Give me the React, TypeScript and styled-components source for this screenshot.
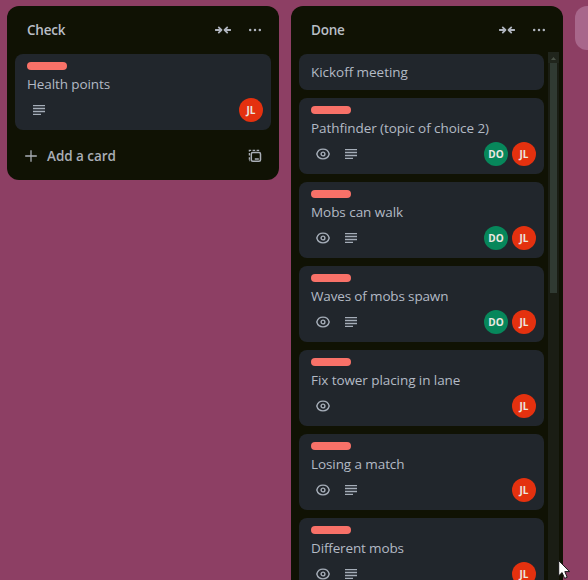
import React from "react";
import styled, { createGlobalStyle } from "styled-components";

const GlobalStyle = createGlobalStyle`
  * { box-sizing: border-box; }
  html, body { margin: 0; padding: 0; overflow: hidden; }
  body { background: #8d3f64; }
`;

const Board = styled.main`
  position: relative;
  display: flex;
  align-items: flex-start;
  gap: 12px;
  width: 588px;
  height: 580px;
  padding: 6px 0 0 7px;
  overflow: hidden;
  background: #8d3f64;
  color: #b3bac5;
  font-family: "Open Sans", "Noto Sans", sans-serif;
  font-size: 13.5px;
  line-height: 20px;
`;

const Column = styled.section<{ $tall?: boolean }>`
  flex: 0 0 272px;
  height: ${(p) => (p.$tall ? "620px" : "174px")};
  border-radius: 12px;
  background: #101204;
  overflow: hidden;
`;

const ColumnHeader = styled.header`
  display: flex;
  align-items: center;
  height: 46px;
  padding: 2px 16px 0 20px;
`;

const ColumnTitle = styled.h2`
  flex: 1;
  margin: 0;
  font-size: 13.5px;
  font-weight: 600;
  line-height: 20px;
  letter-spacing: -0.2px;
  color: #b9bec6;
`;

const HeaderIcons = styled.div`
  display: flex;
  align-items: center;
  gap: 16px;
  color: #aeb3bc;
  svg { display: block; }
`;

const ListBody = styled.div`
  display: flex;
  align-items: flex-start;
  gap: 4px;
`;

const Cards = styled.div`
  display: flex;
  flex: 1;
  flex-direction: column;
  gap: 8px;
  padding: 2px 0 0 8px;
`;

const SingleCards = styled(Cards)`
  padding-right: 8px;
`;

const CardBox = styled.article`
  display: flex;
  flex-direction: column;
  padding: 8px 8px 8px 12px;
  border-radius: 8px;
  background: #21262c;
`;

const Label = styled.div`
  width: 40px;
  height: 8px;
  margin-bottom: 4px;
  border-radius: 4px;
  background: #f87168;
`;

const CardTitle = styled.div<{ $spacing: number }>`
  height: 20px;
  white-space: nowrap;
  letter-spacing: ${(p) => p.$spacing}px;
`;

const CardFooter = styled.div`
  display: flex;
  align-items: center;
  justify-content: space-between;
  height: 24px;
  margin-top: 4px;
`;

const Badges = styled.div`
  display: flex;
  gap: 12px;
  padding-left: 4px;
  color: #a5adb8;
  svg { display: block; }
`;

const Members = styled.div`
  display: flex;
  gap: 4px;
`;

const Avatar = styled.span<{ $color: string }>`
  width: 24px;
  height: 24px;
  border-radius: 50%;
  background: ${(p) => p.$color};
  color: #ece8e2;
  font-size: 10px;
  font-weight: 700;
  line-height: 24px;
  text-align: center;
`;

const AddRow = styled.footer`
  display: flex;
  align-items: center;
  height: 36px;
  margin-top: 8px;
  padding: 0 16px;
  color: #a9aeb6;
  svg { display: block; }
`;

const AddText = styled.span`
  flex: 1;
  margin-left: 8px;
  font-weight: 600;
  letter-spacing: -0.04px;
`;

const ScrollTrack = styled.div`
  flex: 0 0 11px;
  height: 560px;
  margin-right: 4px;
  background: #1a1d14;
`;

const ScrollArrow = styled.div`
  display: flex;
  align-items: center;
  justify-content: center;
  height: 11px;
  background: #20251c;
`;

const ScrollThumb = styled.div`
  height: 230px;
  margin: 0 2px;
  background: #303a32;
`;

const AddListButton = styled.div`
  flex: 0 0 272px;
  height: 44px;
  border-radius: 12px;
  background: #a8678b;
`;

const Pointer = styled.svg`
  position: absolute;
  left: 558px;
  top: 560px;
`;

const CollapseIcon = () => (
  <svg width="16" height="16" viewBox="0 0 16 16" fill="none" stroke="currentColor" strokeWidth="1.8" strokeLinecap="round" strokeLinejoin="round">
    <path d="M.6 8H6M3.8 5.4 6.4 8 3.8 10.6M15.4 8H10M12.2 5.4 9.6 8l2.6 2.6" />
  </svg>
);

const MoreIcon = () => (
  <svg width="16" height="16" viewBox="0 0 16 16" fill="currentColor">
    <circle cx="3.2" cy="8" r="1.25" />
    <circle cx="8" cy="8" r="1.25" />
    <circle cx="12.8" cy="8" r="1.25" />
  </svg>
);

const EyeIcon = () => (
  <svg width="16" height="16" viewBox="0 0 16 16" fill="none" stroke="currentColor" strokeWidth="1.4">
    <path d="M1.8 8C2.6 5 4.9 3.1 8 3.1S13.4 5 14.2 8c-.8 3-3.1 4.9-6.2 4.9S2.6 11 1.8 8Z" />
    <circle cx="8" cy="8" r="1.9" />
  </svg>
);

const TextIcon = () => (
  <svg width="16" height="16" viewBox="0 0 16 16" fill="none" stroke="currentColor" strokeWidth="1.4">
    <path d="M2 3.6h12M2 6.5h12M2 9.5h12M2 12.4h8" />
  </svg>
);

const PlusIcon = () => (
  <svg width="16" height="16" viewBox="0 0 16 16" fill="none" stroke="currentColor" strokeWidth="1.3">
    <path d="M8 2.2v11.6M2.2 8h11.6" />
  </svg>
);

const TemplateIcon = () => (
  <svg width="16" height="16" viewBox="0 0 16 16" fill="none" stroke="currentColor" strokeWidth="1.3">
    <rect x="4.3" y="4.5" width="9.2" height="8.8" rx="1.5" strokeWidth="1.5" />
    <path d="M7.8 10.9h4" strokeWidth="1.5" />
    <path d="M2.4 11.8V9.2M2.4 7.6V5M2.4 3.6V2.4H4.2M5.6 2.4h2.6M9.6 2.4h2.6M2.4 12.6h.8" />
  </svg>
);

const memberColors: Record<string, string> = { DO: "#07875b", JL: "#e4310f" };

interface CardData {
  title: string;
  spacing?: number;
  watched?: boolean;
  described?: boolean;
  members?: string[];
}

const doneCards: CardData[] = [
  { title: "Kickoff meeting", spacing: -0.04 },
  { title: "Pathfinder (topic of choice 2)", spacing: -0.07, watched: true, described: true, members: ["DO", "JL"] },
  { title: "Mobs can walk", spacing: -0.05, watched: true, described: true, members: ["DO", "JL"] },
  { title: "Waves of mobs spawn", spacing: -0.15, watched: true, described: true, members: ["DO", "JL"] },
  { title: "Fix tower placing in lane", spacing: -0.07, watched: true, members: ["JL"] },
  { title: "Losing a match", spacing: -0.09, watched: true, described: true, members: ["JL"] },
  { title: "Different mobs", spacing: -0.15, watched: true, described: true, members: ["JL"] },
];

const Card = ({ title, spacing = 0, watched, described, members }: CardData) => (
  <CardBox>
    {members && <Label />}
    <CardTitle $spacing={spacing}>{title}</CardTitle>
    {members && (
      <CardFooter>
        <Badges>
          {watched && <EyeIcon />}
          {described && <TextIcon />}
        </Badges>
        <Members>
          {members.map((m) => (
            <Avatar key={m} $color={memberColors[m]}>{m}</Avatar>
          ))}
        </Members>
      </CardFooter>
    )}
  </CardBox>
);

const Header = ({ title }: { title: string }) => (
  <ColumnHeader>
    <ColumnTitle>{title}</ColumnTitle>
    <HeaderIcons>
      <CollapseIcon />
      <MoreIcon />
    </HeaderIcons>
  </ColumnHeader>
);

export default function App() {
  return (
    <>
      <GlobalStyle />
      <Board>
        <Column>
          <Header title="Check" />
          <SingleCards>
            <Card title="Health points" spacing={-0.1} described members={["JL"]} />
          </SingleCards>
          <AddRow>
            <PlusIcon />
            <AddText>Add a card</AddText>
            <TemplateIcon />
          </AddRow>
        </Column>
        <Column $tall>
          <Header title="Done" />
          <ListBody>
            <Cards>
              {doneCards.map((c) => (
                <Card key={c.title} {...c} />
              ))}
            </Cards>
            <ScrollTrack>
              <ScrollArrow>
                <svg width="5" height="4" viewBox="0 0 5 4" fill="#4a5247">
                  <path d="M0 4 2.5 1 5 4Z" />
                </svg>
              </ScrollArrow>
              <ScrollThumb />
            </ScrollTrack>
          </ListBody>
        </Column>
        <AddListButton />
        <Pointer width="14" height="20" viewBox="0 0 14 20">
          <path d="M.7.6V15.8L4.1 12.6 6.6 18.4 9.2 17.3 6.8 11.6H11.5Z" fill="#fff" stroke="#171717" strokeWidth="1" />
        </Pointer>
      </Board>
    </>
  );
}
